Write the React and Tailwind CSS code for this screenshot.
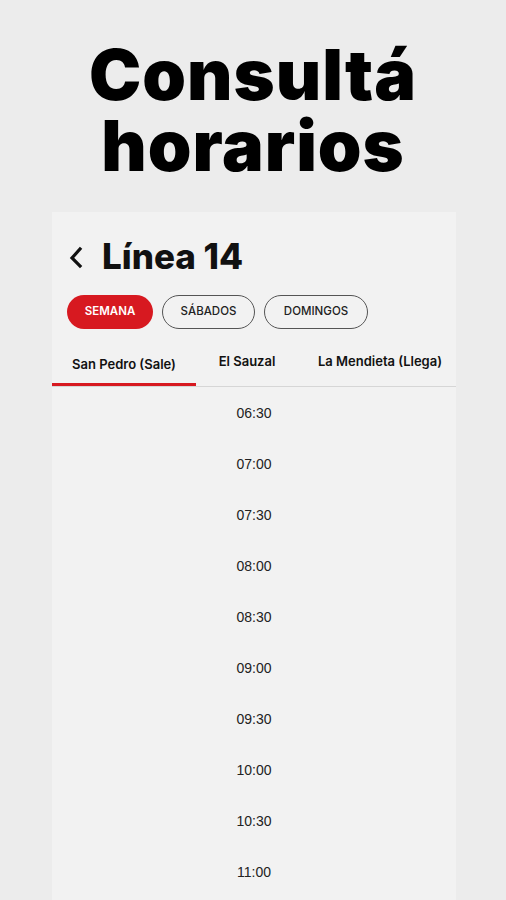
import React from "react";

const times = ["06:30","07:00","07:30","08:00","08:30","09:00","09:30","10:00","10:30","11:00"];

export default function App() {
  return (
    <div className="w-full h-[900px] overflow-hidden bg-[#ececec]" style={{ fontFamily: "Inter, 'Liberation Sans', sans-serif" }}>
      <div className="pt-[39px] flex flex-col items-center text-black font-black text-[70px] leading-[71px] tracking-[1px]">
        <div className="h-[71px]">Consultá</div>
        <div className="h-[71px]">horarios</div>
      </div>
      <div className="ml-[52px] mt-[31px] w-[404px] h-[800px] bg-[#f2f2f2]">
        <div className="flex items-center pt-[22px] pl-[16px] h-[66px]">
          <svg width="16" height="24" viewBox="0 0 16 24" className="mt-[2px]">
            <path d="M12 4 L4 13 L12 21" fill="none" stroke="#111" strokeWidth="3.2" strokeLinecap="square" />
          </svg>
          <span className="ml-[18px] text-[35px] font-extrabold text-[#111] tracking-[0px]">Línea 14</span>
        </div>
        <div className="flex gap-[9px] pl-[15px] mt-[17px]">
          <div className="h-[34px] w-[86px] rounded-full bg-[#d71920] text-white text-[11.5px] font-semibold flex items-center justify-center">SEMANA</div>
          <div className="h-[34px] w-[93px] rounded-full border border-[#555] text-[#222] text-[11.5px] font-medium flex items-center justify-center">SÁBADOS</div>
          <div className="h-[34px] w-[104px] rounded-full border border-[#555] text-[#222] text-[11.5px] font-medium flex items-center justify-center">DOMINGOS</div>
        </div>
        <div className="mt-[11px] flex flex-col">
          <div className="flex h-[46px] text-[13px] font-semibold text-[#111] whitespace-nowrap overflow-hidden">
            <div className="w-[144px] shrink-0 flex flex-col">
              <div className="flex-1 flex items-center justify-center pt-[6px]">San Pedro (Sale)</div>
              <div className="h-[3px] bg-[#d71920]"></div>
            </div>
            <div className="w-[102px] shrink-0 flex items-center justify-center pb-[2px]">El Sauzal</div>
            <div className="shrink-0 pl-[20px] flex items-center pb-[2px]">La Mendieta (Llega)</div>
          </div>
          <div className="h-[1px] bg-[#d6d6d6]"></div>
        </div>
        <div className="flex flex-col items-center pt-[16px]">
          {times.map((t) => (
            <div key={t} className="h-[51px] flex items-start text-[14px] font-medium text-[#222]" style={{ fontFamily: "'Liberation Sans', sans-serif" }}>{t}</div>
          ))}
        </div>
      </div>
    </div>
  );
}
